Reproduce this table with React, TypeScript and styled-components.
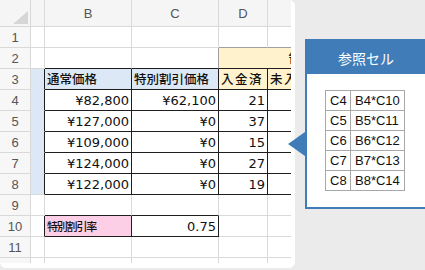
import React from "react";
import styled, { createGlobalStyle } from "styled-components";

const Global = createGlobalStyle`
  html, body { margin: 0; padding: 0; }
  body {
    width: 425px;
    height: 270px;
    overflow: hidden;
    background: #ebebeb;
    font-family: "DejaVu Sans", "Noto Sans CJK JP", sans-serif;
  }
`;

const LIGHT = "#d9d9d9";
const DARK = "#1e1e1e";
const MID = "#a0a0a0";
const BLUE_CELL = "#dce8f5";
const YELLOW = "#fff2cc";
const PINK = "#fccfe6";
const BLUE = "#3f7cb8";

const COLS = [31, 14, 87, 87, 49, 141];

const Page = styled.div`
  display: flex;
  align-items: flex-start;
  width: 425px;
  height: 270px;
`;

const Card = styled.div`
  flex: none;
  width: 295px;
  height: 268px;
  box-sizing: border-box;
  padding: 0 4px 5px 0;
  background: #ffffff;
  border-radius: 0 6px 6px 6px;
  overflow: hidden;
`;

const Viewport = styled.div`
  width: 291px;
  height: 263px;
  overflow: hidden;
`;

const Grid = styled.div`
  display: grid;
  grid-template-columns: ${COLS.map((c) => c + "px").join(" ")};
  grid-template-rows: 27px repeat(12, 21px);
  width: ${COLS.reduce((a, b) => a + b, 0)}px;
`;

const Cell = styled.div<{
  $bg?: string;
  $br?: string;
  $bb?: string;
  $align?: string;
  $span?: number;
}>`
  box-sizing: border-box;
  grid-column: span ${(p) => p.$span || 1};
  background: ${(p) => p.$bg || "#ffffff"};
  border-right: 1px solid ${(p) => p.$br || LIGHT};
  border-bottom: 1px solid ${(p) => p.$bb || LIGHT};
  display: flex;
  align-items: center;
  justify-content: ${(p) =>
    p.$align === "right" ? "flex-end" : p.$align === "center" ? "center" : "flex-start"};
  padding: 0 2px;
  font-family: "DejaVu Sans", "Noto Sans CJK JP", sans-serif;
  font-size: 13px;
  color: #111;
  white-space: nowrap;
  overflow: hidden;
`;

const JpText = styled.span<{ $fs?: number; $ls?: number }>`
  font-family: "Noto Sans CJK JP", sans-serif;
  font-weight: 500;
  font-size: ${(p) => p.$fs || 12.5}px;
  letter-spacing: ${(p) => p.$ls || 0}px;
  line-height: 1;
`;

const HeadCell = styled.div<{ $corner?: boolean }>`
  position: relative;
  box-sizing: border-box;
  background: #f5f5f5;
  border-right: 1px solid ${LIGHT};
  border-bottom: 1px solid ${LIGHT};
  display: flex;
  align-items: center;
  justify-content: center;
  font-family: "Liberation Sans", sans-serif;
  font-size: 13px;
  color: #555;
  ${(p) =>
    p.$corner &&
    `
    &::after {
      content: "";
      position: absolute;
      right: 2px;
      bottom: 2px;
      width: 0;
      height: 0;
      border-left: 15px solid transparent;
      border-bottom: 13px solid #d6d6d6;
    }
  `}
`;

const RowNum = styled.div`
  box-sizing: border-box;
  background: #f7f7f7;
  border-right: 1px solid ${LIGHT};
  border-bottom: 1px solid ${LIGHT};
  display: flex;
  align-items: center;
  justify-content: center;
  font-family: "Liberation Sans", sans-serif;
  font-size: 13px;
  color: #555;
`;

const Panel = styled.div`
  flex: none;
  margin: 39px 0 0 10px;
`;

const Callout = styled.div`
  position: relative;
  width: 122px;
  box-sizing: border-box;
  border: 2px solid ${BLUE};
  background: #ffffff;
`;

const Arrow = styled.div`
  position: absolute;
  left: -19px;
  top: 91px;
  width: 0;
  height: 0;
  border-top: 12px solid transparent;
  border-bottom: 12px solid transparent;
  border-right: 17px solid ${BLUE};
`;

const CalloutTitle = styled.div`
  height: 33px;
  background: ${BLUE};
  color: #ffffff;
  display: flex;
  align-items: center;
  justify-content: center;
  font-family: "Noto Sans CJK JP", sans-serif;
  font-size: 14px;
`;

const CalloutBody = styled.div`
  padding: 16px 0 16px 18px;
`;

const RefTable = styled.table`
  border-collapse: collapse;
  font-family: "Liberation Sans", sans-serif;
  font-size: 13px;
  color: #111;
`;

const RefCell = styled.td<{ $w: number }>`
  width: ${(p) => p.$w}px;
  height: 20px;
  box-sizing: border-box;
  border: 1px solid #a8a8a8;
  padding: 0 0 0 4px;
  line-height: 1;
`;

type Spec = {
  t?: React.ReactNode;
  bg?: string;
  br?: string;
  bb?: string;
  align?: string;
  span?: number;
};

const jp = (s: string, fs?: number, ls?: number) => (
  <JpText $fs={fs} $ls={ls}>
    {s}
  </JpText>
);

const dataRow = (b: string, c: string, d: string, last = false): Spec[] => [
  { bg: BLUE_CELL, br: DARK, bb: last ? LIGHT : BLUE_CELL },
  { t: b, align: "right", br: DARK, bb: DARK },
  { t: c, align: "right", br: DARK, bb: DARK },
  { t: d, align: "right", br: DARK, bb: DARK },
  { bb: DARK },
];

const rows: Spec[][] = [
  [{}, {}, {}, { bb: MID }, { bb: MID }],
  [
    {},
    { bb: DARK },
    { br: MID, bb: DARK },
    { t: jp("領収状況"), bg: YELLOW, span: 2, align: "center", bb: DARK },
  ],
  [
    { bg: BLUE_CELL, br: DARK, bb: BLUE_CELL },
    { t: jp("通常価格"), bg: BLUE_CELL, br: DARK, bb: DARK },
    { t: jp("特別割引価格"), bg: BLUE_CELL, br: DARK, bb: DARK },
    { t: jp("入金済", 12.5, 1.5), bg: YELLOW, br: DARK, bb: DARK },
    { t: jp("未入金", 12.5, 1.5), bg: YELLOW, bb: DARK },
  ],
  dataRow("¥82,800", "¥62,100", "21"),
  dataRow("¥127,000", "¥0", "37"),
  dataRow("¥109,000", "¥0", "15"),
  dataRow("¥124,000", "¥0", "27"),
  dataRow("¥122,000", "¥0", "19", true),
  [{}, { bb: DARK }, { bb: DARK }, {}, {}],
  [
    { br: DARK },
    { t: jp("特別割引率", 11, -1.2), bg: PINK, br: DARK, bb: DARK },
    { t: "0.75", align: "right", br: DARK, bb: DARK },
    {},
    {},
  ],
  [{}, {}, {}, {}, {}],
  [{}, {}, {}, {}, {}],
];

const refs = [
  ["C4", "B4*C10"],
  ["C5", "B5*C11"],
  ["C6", "B6*C12"],
  ["C7", "B7*C13"],
  ["C8", "B8*C14"],
];

export default function App() {
  return (
    <>
      <Global />
      <Page>
        <Card>
          <Viewport>
            <Grid>
              <HeadCell $corner />
              <HeadCell />
              <HeadCell>B</HeadCell>
              <HeadCell>C</HeadCell>
              <HeadCell>D</HeadCell>
              <HeadCell>E</HeadCell>
              {rows.map((row, ri) => (
                <React.Fragment key={ri}>
                  <RowNum>{ri + 1}</RowNum>
                  {row.map((c, ci) => (
                    <Cell
                      key={ci}
                      $bg={c.bg}
                      $br={c.br}
                      $bb={c.bb}
                      $align={c.align}
                      $span={c.span}
                    >
                      {c.t}
                    </Cell>
                  ))}
                </React.Fragment>
              ))}
            </Grid>
          </Viewport>
        </Card>
        <Panel>
          <Callout>
            <Arrow />
            <CalloutTitle>参照セル</CalloutTitle>
            <CalloutBody>
              <RefTable>
                <tbody>
                  {refs.map(([a, b]) => (
                    <tr key={a}>
                      <RefCell $w={25}>{a}</RefCell>
                      <RefCell $w={54}>{b}</RefCell>
                    </tr>
                  ))}
                </tbody>
              </RefTable>
            </CalloutBody>
          </Callout>
        </Panel>
      </Page>
    </>
  );
}
